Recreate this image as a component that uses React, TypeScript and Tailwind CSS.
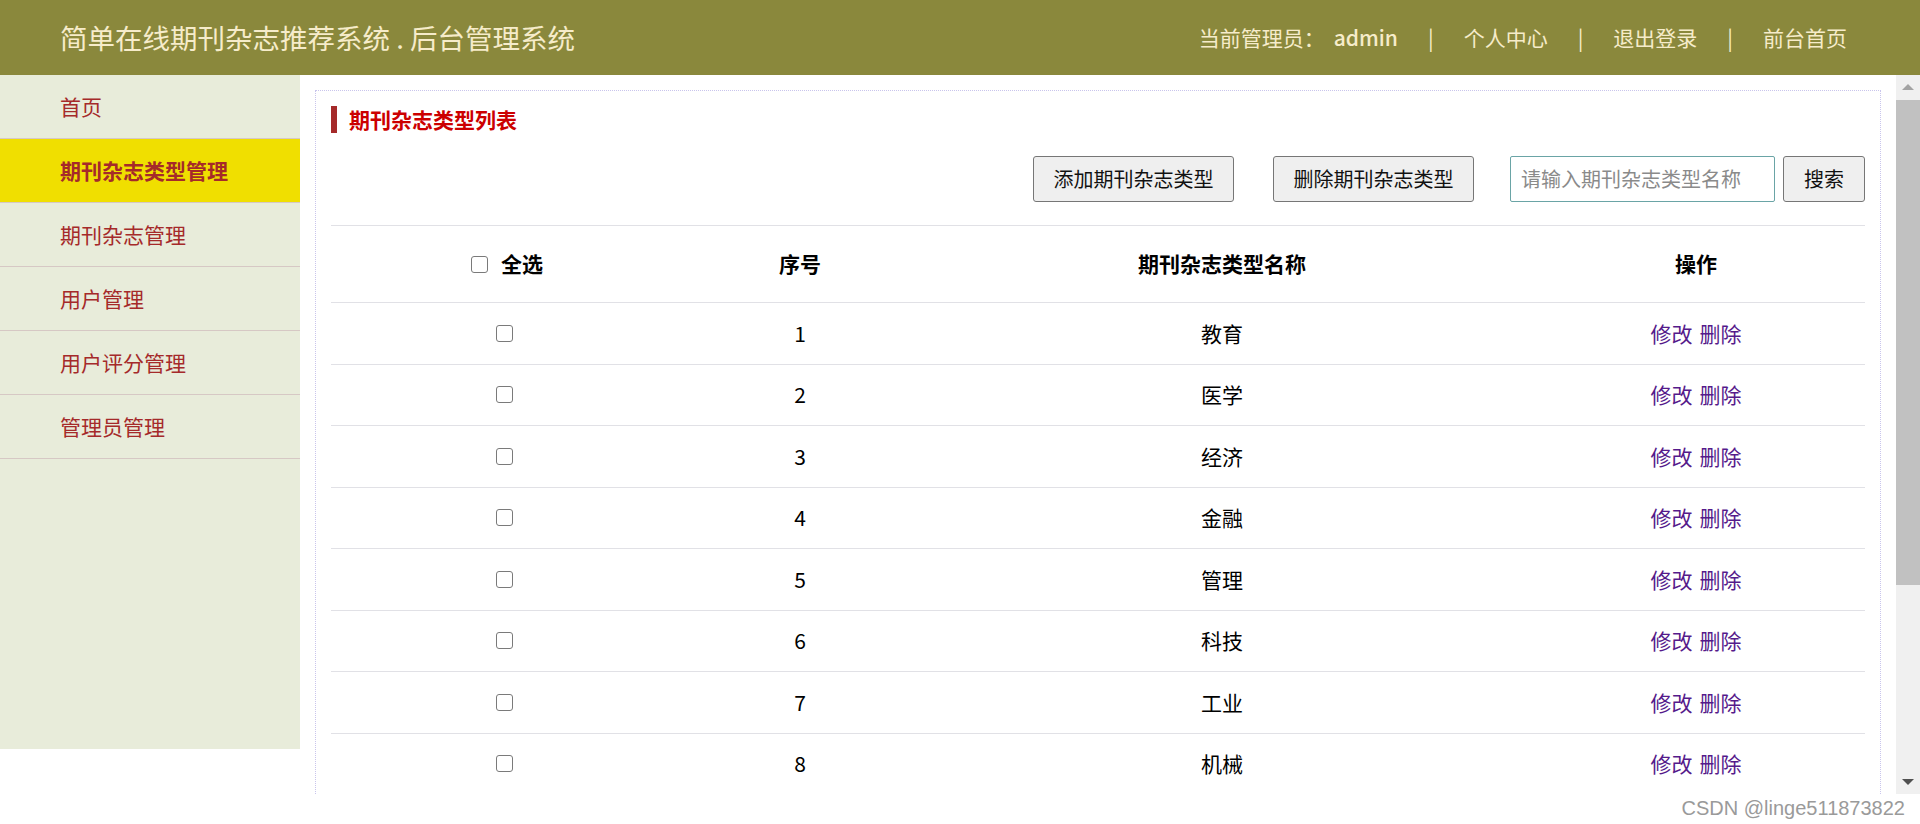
const menu = ["首页", "期刊杂志类型管理", "期刊杂志管理", "用户管理", "用户评分管理", "管理员管理"];

const types = [
  { id: 1, name: "教育" },
  { id: 2, name: "医学" },
  { id: 3, name: "经济" },
  { id: 4, name: "金融" },
  { id: 5, name: "管理" },
  { id: 6, name: "科技" },
  { id: 7, name: "工业" },
  { id: 8, name: "机械" },
  { id: 9, name: "农业" },
  { id: 10, name: "文学" },
];

const CheckBox = () => (
  <input
    type="checkbox"
    className="h-[17px] w-[17px] appearance-none rounded-[3px] border border-[#7a7a7a] bg-white"
  />
);

// the page in the frame scrolls; its bar is drawn here since the shot hides native ones
const ScrollBar = () => (
  <div className="flex w-[24px] shrink-0 flex-col bg-[#f0f0f0]">
    <div className="flex h-[24px] items-center justify-center">
      <svg width="12" height="6" viewBox="0 0 12 6">
        <path d="M0 6 L6 0 L12 6 Z" fill="#a3a3a3" />
      </svg>
    </div>
    <div className="flex-1 pt-[1px]">
      <div className="h-[485px] bg-[#c1c1c1]" />
    </div>
    <div className="flex h-[24px] items-center justify-center">
      <svg width="12" height="6" viewBox="0 0 12 6">
        <path d="M0 0 L12 0 L6 6 Z" fill="#505050" />
      </svg>
    </div>
  </div>
);

export default function App() {
  return (
    <div className="relative h-[824px] w-[1920px] overflow-hidden bg-white font-['Noto_Sans_CJK_SC','Noto_Sans',sans-serif]">
      <header className="flex h-[75px] items-center justify-between bg-[#8a883c] pl-[60px] pr-[73px] text-[#f6ecca]">
        <div className="text-[27.5px] leading-none">简单在线期刊杂志推荐系统 . 后台管理系统</div>
        <div className="flex items-center gap-[30px] text-[21px] leading-none">
          <span>
            当前管理员：<span className="ml-[9px] font-medium">admin</span>
          </span>
          <span>|</span>
          <a>个人中心</a>
          <span>|</span>
          <a>退出登录</a>
          <span>|</span>
          <a>前台首页</a>
        </div>
      </header>

      <div className="flex h-[719px]">
        <aside className="h-[674px] w-[300px] shrink-0 bg-[#e8ecda]">
          {menu.map((m, i) => (
            <div
              key={m}
              className={
                i === 1
                  ? "flex h-[64px] items-center border-b border-[#d6c8c4] bg-[#f0df00] pl-[60px] text-[21px] font-bold text-[#a52a2a]"
                  : "flex h-[64px] items-center border-b border-[#d6c8c4] pl-[60px] text-[21px] text-[#a52a2a]"
              }
            >
              {m}
            </div>
          ))}
        </aside>

        <main className="flex-1 overflow-y-auto bg-white [scrollbar-width:none]">
          <div className="p-[15px]">
            <div className="border border-dotted border-[#c9c5ec] p-[15px]">
              <div className="flex h-[27px] items-center gap-[12px]">
                <div className="h-[27px] w-[6px] bg-[#a52a2a]" />
                <h2 className="text-[21px] font-bold leading-none text-[#cc0000]">期刊杂志类型列表</h2>
              </div>

              <div className="mt-[23px] flex h-[46px] items-stretch justify-end text-[20px] text-[#111]">
                <button className="w-[201px] rounded-[3px] border border-[#767676] bg-[#efefef]">添加期刊杂志类型</button>
                <button className="ml-[39px] w-[201px] rounded-[3px] border border-[#767676] bg-[#efefef]">删除期刊杂志类型</button>
                <input
                  placeholder="请输入期刊杂志类型名称"
                  className="ml-[36px] w-[265px] rounded-[2px] border border-[#6aa4a6] px-[10px] text-[20px] outline-none placeholder:text-[#8a8a8a]"
                />
                <button className="ml-[8px] w-[82px] rounded-[3px] border border-[#767676] bg-[#efefef]">搜索</button>
              </div>

              <div className="mt-[23px] text-[21px] text-black">
                <div className="grid h-[78px] grid-cols-[352px_234px_610px_1fr] items-center border-y border-[#e1e1e6] text-center font-bold">
                  <div className="flex items-center justify-center gap-[13px]">
                    <CheckBox />
                    <span>全选</span>
                  </div>
                  <div>序号</div>
                  <div>期刊杂志类型名称</div>
                  <div>操作</div>
                </div>
                {types.map((t) => (
                  <div
                    key={t.id}
                    className="grid h-[61.5px] grid-cols-[352px_234px_610px_1fr] items-center border-b border-[#e1e1e6] text-center"
                  >
                    <div className="flex justify-center pr-[5px]">
                      <CheckBox />
                    </div>
                    <div>{t.id}</div>
                    <div>{t.name}</div>
                    <div className="flex justify-center gap-[7px] text-[#551a8b]">
                      <a>修改</a>
                      <a>删除</a>
                    </div>
                  </div>
                ))}
              </div>

              <div className="mt-[38px] mb-[38px] flex h-[46px] items-center justify-center gap-[16px] text-[18px] text-[#333]">
                <span>共10条记录</span>
                <span>当前第1/1页</span>
                <a>首页</a>
                <a>上一页</a>
                <a>下一页</a>
                <a>尾页</a>
              </div>
            </div>
          </div>
        </main>

        <ScrollBar />
      </div>

      <div className="absolute bottom-[6px] right-[15px] font-['Liberation_Sans',sans-serif] text-[20px] leading-none text-[#9a9a9a]">
        CSDN @linge511873822
      </div>
    </div>
  );
}
